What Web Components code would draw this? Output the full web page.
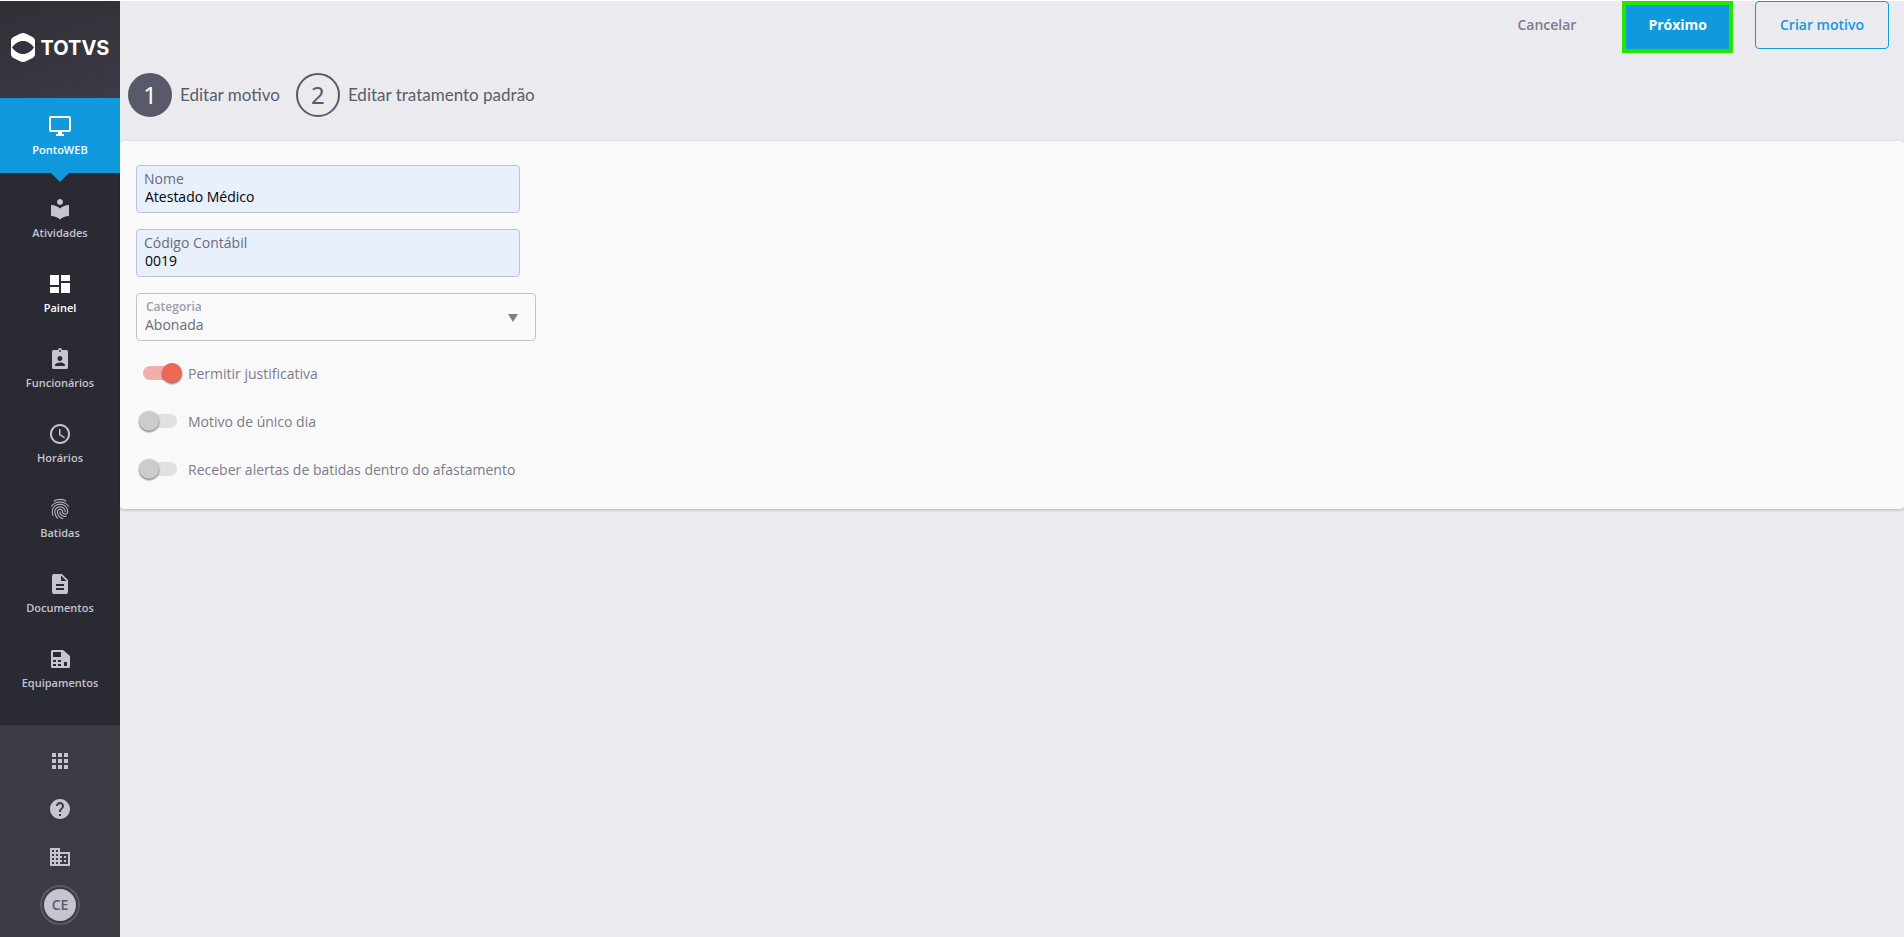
<!DOCTYPE html>
<html lang="pt-BR">
<head>
<meta charset="utf-8">
<meta name="viewport" content="width=device-width, initial-scale=1">
<title>Editar motivo</title>
<style>
  body {
    margin: 0;
    font-family: "Open Sans", "Noto Sans", sans-serif;
    font-size: 14px;
    background: #ebebef;
  }
</style>
</head>
<body>
<ponto-app></ponto-app>

<script>
const icons = {
  desktop: '<path d="M21 2H3c-1.1 0-2 .9-2 2v12c0 1.1.9 2 2 2h7v2H8v2h8v-2h-2v-2h7c1.1 0 2-.9 2-2V4c0-1.1-.9-2-2-2zm0 14H3V4h18v12z"/>',
  library: '<path d="M12 11.55C9.64 9.35 6.48 8 3 8v11c3.48 0 6.64 1.35 9 3.55 2.36-2.19 5.52-3.55 9-3.55V8c-3.48 0-6.64 1.35-9 3.55zM12 8c1.66 0 3-1.34 3-3s-1.34-3-3-3-3 1.34-3 3 1.34 3 3 3z"/>',
  dashboard: '<path d="M2 13h9V3H2v10zm0 8h9v-6H2v6zm11 0h9V11h-9v10zm0-18v6h9V3h-9z"/>',
  badge: '<path fill-rule="evenodd" d="M5.500 3H10a2 2 0 0 1 4 0h4.500A1.500 1.500 0 0 1 20 4.500v16a1.500 1.500 0 0 1-1.500 1.500h-13A1.500 1.500 0 0 1 4 20.500v-16A1.500 1.500 0 0 1 5.500 3zM12 3a1 1 0 1 0 0 2 1 1 0 0 0 0-2zm0 6a2.500 2.500 0 1 0 0 5 2.500 2.500 0 0 0 0-5zm-5 10h10v-1c0-1.700-3.300-2.600-5-2.600s-5 .9-5 2.600z"/>',
  clock: '<path d="M11.990 2C6.470 2 2 6.480 2 12s4.470 10 9.990 10C17.520 22 22 17.520 22 12S17.520 2 11.990 2zM12 20c-4.420 0-8-3.580-8-8s3.580-8 8-8 8 3.580 8 8-3.580 8-8 8zm.5-13H11v6l5.250 3.150.750-1.230-4.500-2.670z"/>',
  fingerprint: '<path d="M17.81 4.47c-.08 0-.16-.02-.23-.06C15.66 3.42 14 3 12.01 3c-1.98 0-3.86.47-5.57 1.41-.24.13-.54.04-.68-.2-.13-.24-.04-.55.2-.68C7.82 2.52 9.86 2 12.01 2c2.13 0 3.99.47 6.03 1.52.25.13.34.43.21.67-.09.18-.26.28-.44.28zM3.500 9.720c-.1 0-.2-.03-.29-.09-.23-.16-.28-.47-.12-.7.99-1.4 2.25-2.5 3.75-3.27C9.98 4.04 14 4.030 17.150 5.650c1.500.770 2.760 1.860 3.750 3.250.16.22.11.54-.12.7-.23.16-.54.11-.7-.12-.9-1.260-2.040-2.250-3.390-2.940-2.870-1.470-6.540-1.470-9.400.010-1.360.7-2.500 1.700-3.400 2.960-.08.14-.23.21-.39.21zm6.250 12.070c-.13 0-.26-.05-.35-.15-.87-.87-1.340-1.430-2.010-2.640-.69-1.230-1.050-2.730-1.050-4.340 0-2.970 2.540-5.390 5.660-5.390s5.660 2.420 5.660 5.390c0 .28-.22.5-.5.5s-.5-.22-.5-.5c0-2.420-2.090-4.390-4.660-4.390-2.570 0-4.660 1.970-4.660 4.390 0 1.440.32 2.770.93 3.850.64 1.150 1.080 1.640 1.850 2.420.19.2.19.51 0 .71-.11.1-.24.15-.37.15zm7.170-1.850c-1.190 0-2.240-.3-3.100-.89-1.490-1.010-2.380-2.650-2.380-4.390 0-.28.22-.5.5-.5s.5.22.5.5c0 1.410.72 2.740 1.940 3.560.71.48 1.540.71 2.540.71.24 0 .64-.03 1.040-.1.27-.05.53.13.58.41.05.27-.13.53-.41.58-.57.11-1.070.12-1.210.12zM14.910 22c-.04 0-.09-.01-.13-.02-1.590-.44-2.630-1.030-3.720-2.100-1.400-1.390-2.170-3.240-2.170-5.220 0-1.620 1.380-2.940 3.080-2.940 1.700 0 3.080 1.320 3.080 2.940 0 1.070.93 1.940 2.080 1.940s2.080-.87 2.080-1.940c0-3.770-3.250-6.830-7.250-6.830-2.840 0-5.440 1.580-6.610 4.030-.39.81-.59 1.760-.59 2.800 0 .78.07 2.010.67 3.610.1.26-.03.55-.29.64-.26.1-.55-.04-.64-.29-.49-1.310-.73-2.610-.73-3.960 0-1.200.23-2.290.68-3.240 1.330-2.790 4.280-4.600 7.510-4.600 4.550 0 8.250 3.510 8.250 7.830 0 1.620-1.380 2.940-3.080 2.940s-3.080-1.320-3.080-2.940c0-1.070-.93-1.940-2.080-1.940s-2.080.87-2.080 1.940c0 1.710.66 3.310 1.870 4.510.95.94 1.860 1.460 3.270 1.850.27.07.42.35.35.61-.05.23-.26.38-.47.38z"/>',
  document: '<path d="M14 2H6c-1.100 0-2 .9-2 2v16c0 1.100.9 2 2 2h12c1.100 0 2-.9 2-2V8l-6-6zm2 16H8v-2h8v2zm0-4H8v-2h8v2zm-3-5V3.500L18.500 9H13z"/>',
  device: '<path fill-rule="evenodd" d="M4.500 3H15l7 6v10.500a1.500 1.500 0 0 1-1.500 1.500h-16A1.500 1.500 0 0 1 3 19.500v-15A1.500 1.500 0 0 1 4.500 3zM5 5v5h8V5zm0 8v2h3v-2zm5 0v2h3v-2zm-5 4v2h3v-2zm5 0v2h3v-2zm6-2v4h3v-4z"/>',
  apps: '<path d="M4 8h4V4H4v4zm6 12h4v-4h-4v4zm-6 0h4v-4H4v4zm0-6h4v-4H4v4zm6 0h4v-4h-4v4zm6-10v4h4V4h-4zm-6 4h4V4h-4v4zm6 6h4v-4h-4v4zm0 6h4v-4h-4v4z"/>',
  help: '<path d="M12 2C6.480 2 2 6.480 2 12s4.480 10 10 10 10-4.480 10-10S17.520 2 12 2zm1 17h-2v-2h2v2zm2.070-7.750l-.9.920C13.450 12.900 13 13.500 13 15h-2v-.5c0-1.100.450-2.100 1.170-2.830l1.240-1.260c.370-.360.590-.860.590-1.410 0-1.100-.9-2-2-2s-2 .9-2 2H8c0-2.210 1.790-4 4-4s4 1.790 4 4c0 .880-.360 1.680-.930 2.250z"/>',
  company: '<path d="M12 7V3H2v18h20V7H12zM6 19H4v-2h2v2zm0-4H4v-2h2v2zm0-4H4V9h2v2zm0-4H4V5h2v2zm4 12H8v-2h2v2zm0-4H8v-2h2v2zm0-4H8V9h2v2zm0-4H8V5h2v2zm10 12h-8v-2h2v-2h-2v-2h2v-2h-2V9h8v10zm-2-8h-2v2h2v-2zm0 4h-2v2h2v-2z"/>'
};

customElements.define("custom-svg-icon", class CustomSvgIcon extends HTMLElement {
  constructor() {
    super();
    this.attachShadow({ mode: "open" });
  }
  connectedCallback() {
    this.shadowRoot.innerHTML = `<style>
      :host {
        display: block;
        width: 24px;
        height: 24px;
      }
      svg {
        display: block;
        fill: currentColor;
      }
    </style>
    <svg viewBox="0 0 24 24" width="100%" height="100%" aria-hidden="true">${icons[this.getAttribute("icon")]}</svg>`;
  }
});

customElements.define("brand-logo", class BrandLogo extends HTMLElement {
  constructor() {
    super();
    this.attachShadow({ mode: "open" });
    this.shadowRoot.innerHTML = `<style>
      :host {
        display: flex;
        align-items: center;
        justify-content: center;
        gap: 6px;
        box-sizing: border-box;
        height: 97px;
        padding-bottom: 4px;
        color: #fff;
        font: 700 20px/24px Inter, sans-serif;
        background: linear-gradient(160deg, #302f36, #3c3b46);
      }
      svg {
        fill: #fff;
      }
    </style>
    <svg width="24" height="29" viewBox="0 0 24 29" aria-hidden="true">
      <path fill-rule="evenodd" d="M12 0c1 0 2 .3 3 .8l6.500 3.200C23.200 4.900 24 6.200 24 8v13c0 1.800-.8 3.100-2.500 4L15 28.200c-2 1-4 1-6 0L2.500 25C.8 24.100 0 22.800 0 21V8c0-1.800.8-3.100 2.500-4L9 .8C10 .3 11 0 12 0zM1 14.500C4 18.500 7.500 21 12 21s8-2.500 11-6.500C20 10.500 16.500 8 12 8S4 10.500 1 14.500z"/>
    </svg>
    <span>TOTVS</span>`;
  }
});

customElements.define("nav-item", class NavItem extends HTMLElement {
  constructor() {
    super();
    this.attachShadow({ mode: "open" });
  }
  connectedCallback() {
    this.shadowRoot.innerHTML = `<style>
      :host {
        display: block;
        color: #c5c4cf;
      }
      :host([active]) {
        position: relative;
        margin-bottom: 8px;
        color: #fff;
        background: #1199dd;
      }
      :host([active])::after {
        content: "";
        position: absolute;
        top: 100%;
        left: calc(50% - 9px);
        border: 9px solid transparent;
        border-top-color: #1199dd;
        border-bottom: 0;
      }
      :host([current]) {
        color: #fff;
      }
      a {
        display: flex;
        flex-direction: column;
        align-items: center;
        gap: 3px;
        box-sizing: border-box;
        height: 75px;
        padding-top: 16px;
        color: inherit;
        text-decoration: none;
        font-size: 11px;
        font-weight: 600;
        line-height: 18px;
      }
    </style>
    <a href="#"><custom-svg-icon icon="${this.getAttribute("icon")}"></custom-svg-icon><slot></slot></a>`;
  }
});

customElements.define("side-nav", class SideNav extends HTMLElement {
  constructor() {
    super();
    this.attachShadow({ mode: "open" });
    this.shadowRoot.innerHTML = this.template;
  }
  get template() {
    return `<style>
      :host {
        display: flex;
        flex-direction: column;
        width: 120px;
        flex: none;
        background: #2a2a32;
      }
      nav {
        flex: 1;
      }
      footer {
        display: flex;
        flex-direction: column;
        align-items: center;
        padding: 12px 0 8px;
        background: #3c3b44;
      }
      button {
        display: flex;
        align-items: center;
        justify-content: center;
        width: 48px;
        height: 48px;
        padding: 0;
        border: 0;
        background: none;
        color: #c5c4cf;
        font: inherit;
      }
      .avatar {
        box-sizing: border-box;
        width: 40px;
        height: 40px;
        padding: 2px;
        border: 2px solid #595869;
        border-radius: 50%;
      }
      .avatar span {
        display: block;
        border-radius: 50%;
        background: #c5c4cf;
        color: #595b6b;
        font-weight: 600;
        line-height: 32px;
      }
    </style>
    <brand-logo></brand-logo>
    <nav>
      <nav-item icon="desktop" active>PontoWEB</nav-item>
      <nav-item icon="library">Atividades</nav-item>
      <nav-item icon="dashboard" current>Painel</nav-item>
      <nav-item icon="badge">Funcionários</nav-item>
      <nav-item icon="clock">Horários</nav-item>
      <nav-item icon="fingerprint">Batidas</nav-item>
      <nav-item icon="document">Documentos</nav-item>
      <nav-item icon="device">Equipamentos</nav-item>
    </nav>
    <footer>
      <button type="button" aria-label="Aplicativos"><custom-svg-icon icon="apps"></custom-svg-icon></button>
      <button type="button" aria-label="Ajuda"><custom-svg-icon icon="help"></custom-svg-icon></button>
      <button type="button" aria-label="Empresa"><custom-svg-icon icon="company"></custom-svg-icon></button>
      <button type="button"><div class="avatar"><span>CE</span></div></button>
    </footer>`;
  }
});

customElements.define("action-button", class ActionButton extends HTMLElement {
  constructor() {
    super();
    this.attachShadow({ mode: "open" });
    this.shadowRoot.innerHTML = `<style>
      :host {
        display: block;
      }
      button {
        display: block;
        box-sizing: border-box;
        height: 48px;
        padding: 0 24px 2px;
        border: 0;
        background: none;
        color: #7c7b8d;
        font: inherit;
        font-weight: 600;
      }
      :host([primary]) button {
        height: 52px;
        padding: 0 22px 6px;
        border: 4px solid #26e600;
        background: #1199dd;
        color: #fff;
        font-weight: 700;
      }
      :host([outlined]) button {
        border: 1px solid #1199dd;
        border-radius: 4px;
        color: #1199dd;
      }
    </style>
    <button type="button"><slot></slot></button>`;
  }
});

customElements.define("step-item", class StepItem extends HTMLElement {
  constructor() {
    super();
    this.attachShadow({ mode: "open" });
  }
  connectedCallback() {
    this.shadowRoot.innerHTML = `<style>
      :host {
        display: flex;
        align-items: center;
        gap: 8px;
        color: #595b6b;
        font-family: Lato, sans-serif;
        font-size: 17px;
      }
      .number {
        box-sizing: border-box;
        width: 44px;
        height: 44px;
        border: 2px solid #58596b;
        border-radius: 50%;
        font-family: "Noto Sans", sans-serif;
        font-size: 24px;
        line-height: 40px;
        text-align: center;
      }
      :host([active]) .number {
        background: #58596b;
        color: #fff;
      }
      .label {
        padding-bottom: 2px;
      }
    </style>
    <span class="number">${this.getAttribute("number")}</span>
    <span class="label"><slot></slot></span>`;
  }
});

customElements.define("text-field", class TextField extends HTMLElement {
  constructor() {
    super();
    this.attachShadow({ mode: "open" });
  }
  connectedCallback() {
    this.shadowRoot.innerHTML = `<style>
      :host {
        display: flex;
        flex-direction: column;
        box-sizing: border-box;
        width: 384px;
        max-width: 100%;
        height: 48px;
        padding: 4px 7px;
        border: 1px solid #c2c1cf;
        border-radius: 4px;
        background: #e8f0fe;
      }
      label {
        color: #6a6a78;
        line-height: 18px;
      }
      input {
        padding: 0 1px;
        border: 0;
        outline: 0;
        background: none;
        color: #000;
        font: inherit;
        line-height: 18px;
        height: 18px;
      }
    </style>
    <label for="input">${this.getAttribute("label")}</label>
    <input id="input" type="text" value="${this.getAttribute("value")}">`;
  }
});

customElements.define("select-field", class SelectField extends HTMLElement {
  constructor() {
    super();
    this.attachShadow({ mode: "open" });
  }
  connectedCallback() {
    this.shadowRoot.innerHTML = `<style>
      :host {
        display: flex;
        align-items: center;
        box-sizing: border-box;
        width: 400px;
        max-width: 100%;
        height: 48px;
        padding: 2px 17px 0 8px;
        border: 1px solid #c2c1cf;
        border-radius: 4px;
      }
      .control {
        display: flex;
        flex: 1;
        flex-direction: column;
        padding-bottom: 4px;
      }
      label {
        padding-left: 1px;
        color: #9d9cae;
        font-size: 12px;
        font-weight: 600;
        line-height: 16px;
      }
      select {
        appearance: none;
        height: 19px;
        padding: 0;
        border: 0;
        outline: 0;
        background: none;
        color: #6a6a78;
        font: inherit;
      }
      i {
        border: 5px solid transparent;
        border-top: 8px solid #7f7f7f;
        border-bottom: 0;
      }
    </style>
    <div class="control">
      <label for="select">${this.getAttribute("label")}</label>
      <select id="select"><option>${this.getAttribute("value")}</option></select>
    </div>
    <i></i>`;
  }
});

customElements.define("toggle-switch", class ToggleSwitch extends HTMLElement {
  constructor() {
    super();
    this.attachShadow({ mode: "open" });
  }
  connectedCallback() {
    this.shadowRoot.innerHTML = `<style>
      :host {
        display: block;
      }
      label {
        display: flex;
        align-items: center;
        gap: 11px;
        height: 48px;
        padding-left: 7px;
        color: #7c7b8d;
      }
      input {
        appearance: none;
        position: relative;
        width: 34px;
        height: 14px;
        margin: 0;
        border-radius: 7px;
        background: #e1e1e1;
      }
      input::before {
        content: "";
        position: absolute;
        top: -3px;
        left: -4px;
        width: 20px;
        height: 20px;
        border-radius: 50%;
        background: #cccccc;
        box-shadow: 0 1px 2px rgba(0, 0, 0, .6);
      }
      input:checked {
        background: #f4aea8;
      }
      input:checked::before {
        left: 19px;
        background: #ee6655;
      }
    </style>
    <label><input type="checkbox" role="switch"${this.hasAttribute("checked") ? " checked" : ""}><slot></slot></label>`;
  }
});

customElements.define("ponto-app", class PontoApp extends HTMLElement {
  constructor() {
    super();
    this.attachShadow({ mode: "open" });
    this.shadowRoot.innerHTML = this.template;
  }
  get template() {
    return `<style>
      :host {
        display: flex;
        box-sizing: border-box;
        min-height: 100vh;
        border-top: 1px solid #fff;
      }
      main {
        flex: 1;
        min-width: 0;
      }
      .actions {
        display: flex;
        align-items: flex-start;
        justify-content: flex-end;
        gap: 22px;
        height: 72px;
        padding-right: 15px;
      }
      .steps {
        display: flex;
        gap: 16px;
        padding: 0 8px 24px;
      }
      form {
        display: flex;
        flex-direction: column;
        gap: 16px;
        padding: 24px 16px 16px;
        border-radius: 4px;
        background: #f9f9f9;
        box-shadow: 0 1px 3px rgba(0, 0, 0, .25);
      }
      .switches {
        margin-top: -8px;
      }
    </style>
    <side-nav></side-nav>
    <main>
      <div class="actions">
        <action-button>Cancelar</action-button>
        <action-button primary>Próximo</action-button>
        <action-button outlined>Criar motivo</action-button>
      </div>
      <div class="steps">
        <step-item number="1" active>Editar motivo</step-item>
        <step-item number="2">Editar tratamento padrão</step-item>
      </div>
      <form>
        <text-field label="Nome" value="Atestado Médico"></text-field>
        <text-field label="Código Contábil" value="0019"></text-field>
        <select-field label="Categoria" value="Abonada"></select-field>
        <div class="switches">
          <toggle-switch checked>Permitir justificativa</toggle-switch>
          <toggle-switch>Motivo de único dia</toggle-switch>
          <toggle-switch>Receber alertas de batidas dentro do afastamento</toggle-switch>
        </div>
      </form>
    </main>`;
  }
});
</script>
</body>
</html>
